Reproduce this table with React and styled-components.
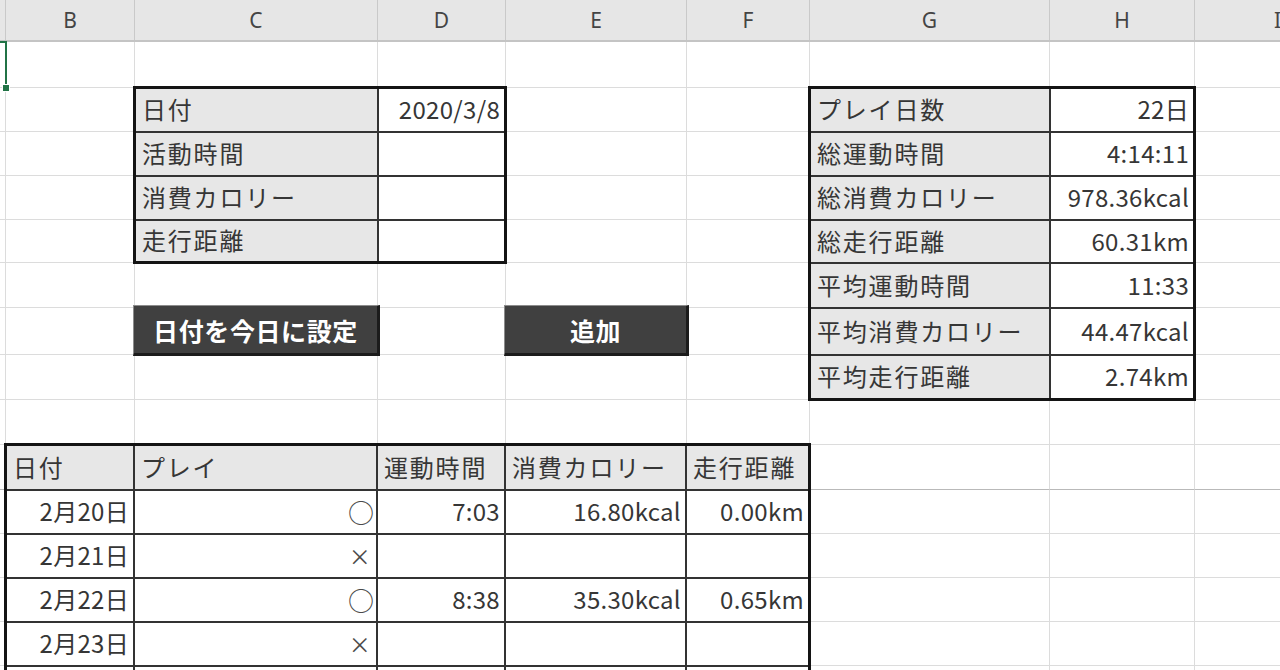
import React from 'react';
import styled, { createGlobalStyle } from 'styled-components';

const COLS = [6, 129, 243, 128, 181, 123, 240, 145, 166];
const ROWS = [46, 44, 44, 44, 43, 45, 47, 45, 45, 45, 44, 44, 44, 44, 44];
const LETTERS = ['', 'B', 'C', 'D', 'E', 'F', 'G', 'H', 'I'];
const FREEZE_ROW = 10;

const GlobalStyle = createGlobalStyle`
  html, body {
    margin: 0;
    padding: 0;
    height: 670px;
    overflow: hidden;
    background: #ffffff;
  }
  * {
    box-sizing: border-box;
  }
`;

const Sheet = styled.div`
  position: relative;
  width: 1280px;
  height: 670px;
  overflow: hidden;
  font-family: "Noto Sans CJK JP", "Noto Sans", sans-serif;
  color: #363636;
`;

const ColumnHeader = styled.div`
  display: grid;
  grid-template-columns: ${COLS.map(w => `${w}px`).join(' ')};
  height: 42px;
  background: #e6e6e6;
  border-bottom: 2px solid #c4c4c4;
`;

const ColumnLetter = styled.div`
  display: flex;
  align-items: center;
  justify-content: center;
  border-right: 1px solid #c9c9c9;
  font-family: "Noto Sans", "Open Sans", sans-serif;
  font-size: 21px;
  color: #444;
`;

const Body = styled.div`
  display: grid;
  grid-template-columns: ${COLS.map(w => `${w}px`).join(' ')};
  grid-template-rows: ${ROWS.map(h => `${h}px`).join(' ')};
`;

const GridCell = styled.div`
  grid-area: ${p => p.$r} / ${p => p.$c};
  border-right: 1px solid #dcdcdc;
  border-bottom: 1px solid ${p => (p.$freeze ? '#b9b9b9' : '#dcdcdc')};
`;

const Table = styled.div`
  grid-column: ${p => p.$cols};
  grid-row: ${p => p.$rows};
  margin: -2px -1px -1px -2px;
  display: grid;
  grid-template-columns: ${p => p.$colTemplate};
  grid-template-rows: ${p => p.$rowTemplate};
  gap: 2px;
  background: #333;
  border: 3px solid #141414;
  z-index: 1;
`;

const Cell = styled.div`
  display: flex;
  align-items: center;
  justify-content: ${p => (p.$right ? 'flex-end' : 'flex-start')};
  padding: 0 4px 1px 6px;
  background: ${p => (p.$label ? '#e7e7e7' : '#ffffff')};
  font-size: 24px;
  line-height: 1.2;
  letter-spacing: ${p => (p.$label ? '1.8px' : '0.3px')};
  white-space: nowrap;
  overflow: hidden;
`;

const Mark = styled.span`
  display: inline-block;
  width: 24px;
  text-align: center;
  font-size: ${p => (p.$circle ? '26px' : '22px')};
  color: #4a4a4a;
`;

const Button = styled.div`
  grid-column: ${p => p.$col};
  grid-row: 7;
  margin: -3px -2px -1px -2px;
  display: flex;
  align-items: center;
  justify-content: center;
  background: #404040;
  border-top: 1px solid #8c8c8c;
  border-left: 1px solid #8c8c8c;
  border-right: 3px solid #1c1c1c;
  border-bottom: 3px solid #1c1c1c;
  color: #ffffff;
  font-size: 25px;
  font-weight: 700;
  letter-spacing: 0.6px;
  z-index: 1;
`;

const SelectionEdge = styled.div`
  position: absolute;
  left: 5px;
  top: 41px;
  width: 2px;
  height: 47px;
  background: #217346;
  z-index: 2;
`;

const SelectionTop = styled.div`
  position: absolute;
  left: 0;
  top: 41px;
  width: 7px;
  height: 2px;
  background: #217346;
  z-index: 2;
`;

const SelectionHandle = styled.div`
  position: absolute;
  left: 2px;
  top: 84px;
  width: 8px;
  height: 8px;
  background: #217346;
  border: 1px solid #ffffff;
  z-index: 3;
`;

const inputRows = [
  ['日付', '2020/3/8'],
  ['活動時間', ''],
  ['消費カロリー', ''],
  ['走行距離', ''],
];

const summaryRows = [
  ['プレイ日数', '22日'],
  ['総運動時間', '4:14:11'],
  ['総消費カロリー', '978.36kcal'],
  ['総走行距離', '60.31km'],
  ['平均運動時間', '11:33'],
  ['平均消費カロリー', '44.47kcal'],
  ['平均走行距離', '2.74km'],
];

const logHeader = ['日付', 'プレイ', '運動時間', '消費カロリー', '走行距離'];

// last row is only its top border in view
const logRows = [
  ['2月20日', '○', '7:03', '16.80kcal', '0.00km'],
  ['2月21日', '×', '', '', ''],
  ['2月22日', '○', '8:38', '35.30kcal', '0.65km'],
  ['2月23日', '×', '', '', ''],
  ['', '', '', '', ''],
];

const App = () => {
  const gridCells = [];
  ROWS.forEach((_, r) => {
    COLS.forEach((__, c) => {
      gridCells.push(
        <GridCell key={`${r}-${c}`} $r={r + 1} $c={c + 1} $freeze={r + 1 === FREEZE_ROW} />
      );
    });
  });

  return (
    <>
      <GlobalStyle />
      <Sheet>
        <ColumnHeader>
          {LETTERS.map((l, i) => (
            <ColumnLetter key={i}>{l}</ColumnLetter>
          ))}
        </ColumnHeader>

        <Body>
          {gridCells}

          <Table $cols="3 / 5" $rows="2 / 6" $colTemplate="241px 1fr" $rowTemplate="42px 42px 42px 1fr">
            {inputRows.map(([label, value]) => (
              <React.Fragment key={label}>
                <Cell $label>{label}</Cell>
                <Cell $right>{value}</Cell>
              </React.Fragment>
            ))}
          </Table>

          <Table
            $cols="7 / 9"
            $rows="2 / 9"
            $colTemplate="238px 1fr"
            $rowTemplate="42px 42px 42px 41px 43px 45px 1fr"
          >
            {summaryRows.map(([label, value]) => (
              <React.Fragment key={label}>
                <Cell $label>{label}</Cell>
                <Cell $right>{value}</Cell>
              </React.Fragment>
            ))}
          </Table>

          <Button $col="3">日付を今日に設定</Button>
          <Button $col="5">追加</Button>

          <Table
            $cols="2 / 7"
            $rows="10 / 16"
            $colTemplate="126px 241px 126px 179px 1fr"
            $rowTemplate="43px 42px 42px 42px 42px 1fr"
          >
            {logHeader.map(h => (
              <Cell key={h} $label>{h}</Cell>
            ))}
            {logRows.map((row, r) =>
              row.map((v, i) => (
                <Cell key={`${r}-${i}`} $right>
                  {i === 1 && v ? <Mark $circle={v === '○'}>{v}</Mark> : v}
                </Cell>
              ))
            )}
          </Table>
        </Body>

        <SelectionTop />
        <SelectionEdge />
        <SelectionHandle />
      </Sheet>
    </>
  );
};

export default App;
